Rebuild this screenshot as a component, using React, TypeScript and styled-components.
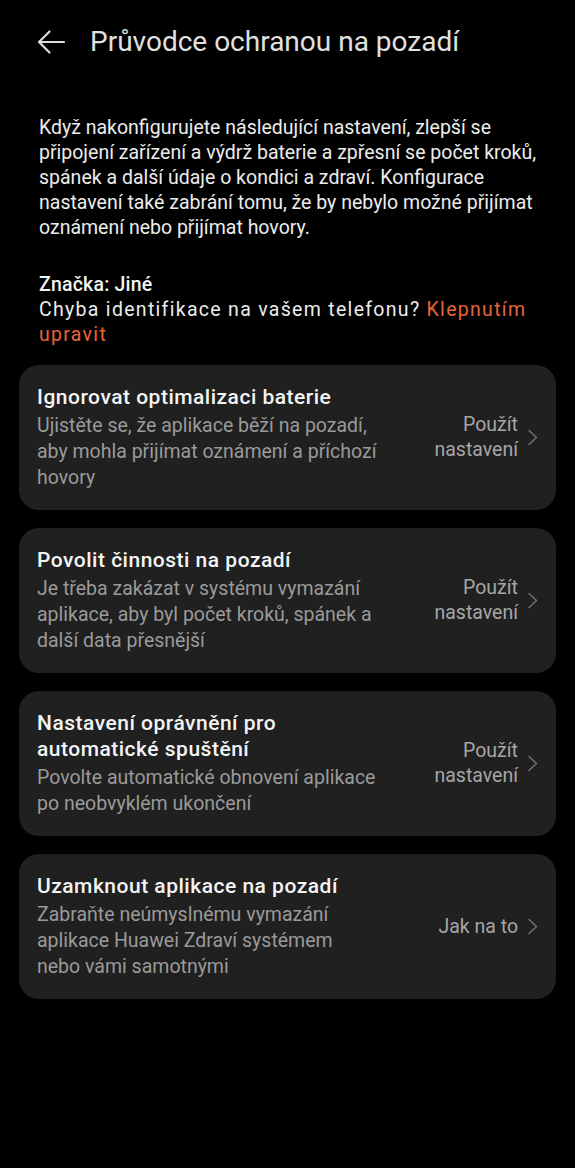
import React from "react";
import styled, { createGlobalStyle } from "styled-components";

const Global = createGlobalStyle`
  html, body { margin: 0; padding: 0; background: #000; }
  body { font-family: Roboto, "Noto Sans", "Liberation Sans", sans-serif; -webkit-font-smoothing: antialiased; }
  * { box-sizing: border-box; }
`;

const Page = styled.div`
  width: 575px;
  min-height: 1168px;
  background: #000;
  padding: 0 19px 0 19px;
  display: flex;
  flex-direction: column;
`;

const Header = styled.header`
  display: flex;
  align-items: center;
  height: 34px;
  margin-top: 25px;
  padding-left: 18px;
  gap: 25px;
`;

const BackButton = styled.button`
  display: flex;
  align-items: center;
  justify-content: center;
  width: 28px;
  height: 28px;
  padding: 0;
  border: none;
  background: transparent;
  color: #dcdcdc;
`;

const Title = styled.h1`
  margin: 0;
  font-size: 28px;
  font-weight: 400;
  line-height: 34px;
  color: #e0e0e0;
`;

const Intro = styled.p`
  margin: 56px 0 0 0;
  padding-left: 20px;
  padding-right: 10px;
  font-size: 19.5px;
  line-height: 25px;
  color: #ececec;
`;

const Brand = styled.div`
  margin-top: 32px;
  padding-left: 20px;
  font-size: 19.5px;
  line-height: 25px;
  color: #ececec;
  letter-spacing: 1.3px;
`;

const BrandLabel = styled.div`
  font-weight: 500;
  color: #f4f4f4;
  letter-spacing: 0.2px;
`;

const Link = styled.span`
  color: #e8643a;
`;

const List = styled.div`
  margin-top: 18px;
  display: flex;
  flex-direction: column;
  gap: 18px;
`;

const Card = styled.div`
  background: #202020;
  border-radius: 20px;
  padding: 18px 17px 19px 18px;
  display: flex;
  align-items: center;
  min-height: 145px;
`;

const CardText = styled.div`
  width: 343px;
  flex: none;
  display: flex;
  flex-direction: column;
`;

const CardTitle = styled.div`
  font-size: 21px;
  font-weight: 500;
  line-height: 26px;
  letter-spacing: 0.5px;
  color: #f4f4f4;
  margin-bottom: 3px;
`;

const CardDesc = styled.div`
  font-size: 19.5px;
  line-height: 26px;
  color: #9a9a9a;
`;

const Action = styled.div`
  flex: 1;
  display: flex;
  align-items: center;
  justify-content: flex-end;
  gap: 9px;
`;

const ActionLabel = styled.div`
  text-align: right;
  font-size: 19.5px;
  line-height: 25px;
  color: #a6a6a6;
`;

const Chevron = () => (
  <svg width="12" height="17" viewBox="0 0 12 17" fill="none">
    <polyline points="2,1.5 9.5,8.5 2,15.5" stroke="#6e6e6e" strokeWidth="1.6" strokeLinecap="round" strokeLinejoin="round" />
  </svg>
);

const BackArrow = () => (
  <svg width="28" height="24" viewBox="0 0 28 24" fill="none">
    <path d="M27 12H2 M12.5 1.5L2 12l10.5 10.5" stroke="#dcdcdc" strokeWidth="2.2" strokeLinecap="round" strokeLinejoin="round" />
  </svg>
);

type Item = { title: React.ReactNode; desc: string; action: React.ReactNode };

const items: Item[] = [
  {
    title: "Ignorovat optimalizaci baterie",
    desc: "Ujistěte se, že aplikace běží na pozadí, aby mohla přijímat oznámení a příchozí hovory",
    action: (<>Použít<br />nastavení</>),
  },
  {
    title: "Povolit činnosti na pozadí",
    desc: "Je třeba zakázat v systému vymazání aplikace, aby byl počet kroků, spánek a další data přesnější",
    action: (<>Použít<br />nastavení</>),
  },
  {
    title: "Nastavení oprávnění pro automatické spuštění",
    desc: "Povolte automatické obnovení aplikace po neobvyklém ukončení",
    action: (<>Použít<br />nastavení</>),
  },
  {
    title: "Uzamknout aplikace na pozadí",
    desc: "Zabraňte neúmyslnému vymazání aplikace Huawei Zdraví systémem nebo vámi samotnými",
    action: "Jak na to",
  },
];

export default function App() {
  return (
    <>
      <Global />
      <Page>
        <Header>
          <BackButton aria-label="Zpět"><BackArrow /></BackButton>
          <Title>Průvodce ochranou na pozadí</Title>
        </Header>
        <Intro>
          Když nakonfigurujete následující nastavení, zlepší se připojení zařízení a výdrž baterie a zpřesní se počet kroků, spánek a další údaje o kondici a zdraví. Konfigurace nastavení také zabrání tomu, že by nebylo možné přijímat oznámení nebo přijímat hovory.
        </Intro>
        <Brand>
          <BrandLabel>Značka: Jiné</BrandLabel>
          <div>Chyba identifikace na vašem telefonu? <Link>Klepnutím</Link> <Link>upravit</Link></div>
        </Brand>
        <List>
          {items.map((it, i) => (
            <Card key={i}>
              <CardText>
                <CardTitle>{it.title}</CardTitle>
                <CardDesc>{it.desc}</CardDesc>
              </CardText>
              <Action>
                <ActionLabel>{it.action}</ActionLabel>
                <Chevron />
              </Action>
            </Card>
          ))}
        </List>
      </Page>
    </>
  );
}
